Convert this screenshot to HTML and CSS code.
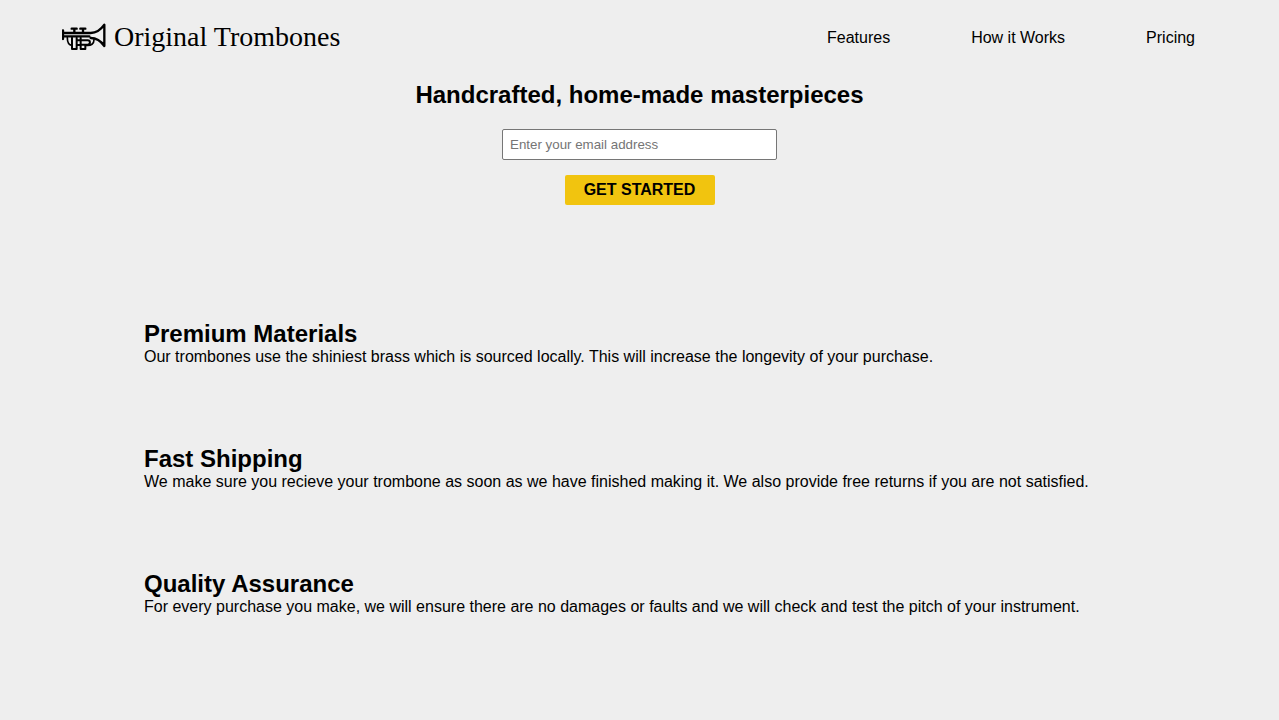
FILE: index.html
```html
<!DOCTYPE html>
<html lang="en">
<head>
  <meta charset="utf-8">
  <meta name="viewport" content="width=device-width, initial-scale=1">
  <title>Original Trombones</title>
  <link rel="stylesheet" href="styles.css">
</head>
<body class="page">
  <header class="header">
    <a class="brand" href="#top">
      <svg class="brand-icon" viewBox="20 22 132 84" fill="none" stroke="#000" stroke-width="7" stroke-linejoin="round" stroke-linecap="round" aria-hidden="true">
        <path d="M23 44v26M24 52h82c18 0 30-9 41-25v64c-11-16-23-24-41-24M24 62h78"/>
        <path d="M49 39h15M75 39h15M57 40v11M83 40v11"/>
        <path d="M36 66c0 14 5 22 14 23M92 89c16 2 24-5 24-17" stroke-width="5"/>
        <path d="M50 66v34h14v-34M76 66v34h14v-10M64 74h12M64 88h12M78 74h19c9 0 9 13 0 13h-19" stroke-width="6"/>
      </svg>
      <span class="brand-name">Original Trombones</span>
    </a>
    <nav class="nav" aria-label="Main">
      <a class="nav-link" href="#features">Features</a>
      <a class="nav-link" href="#how">How it Works</a>
      <a class="nav-link" href="#pricing">Pricing</a>
    </nav>
  </header>
  <main>
    <section class="hero" id="top">
      <h1 class="title">Handcrafted, home-made masterpieces</h1>
      <form class="signup">
        <input class="email" type="email" placeholder="Enter your email address" aria-label="Email address">
        <button class="submit" type="submit">GET STARTED</button>
      </form>
    </section>
    <section class="features" id="features">
      <article>
        <h2 class="title">Premium Materials</h2>
        <p class="text">Our trombones use the shiniest brass which is sourced locally. This will increase the longevity of your purchase.</p>
      </article>
      <article>
        <h2 class="title">Fast Shipping</h2>
        <p class="text">We make sure you recieve your trombone as soon as we have finished making it. We also provide free returns if you are not satisfied.</p>
      </article>
      <article>
        <h2 class="title">Quality Assurance</h2>
        <p class="text">For every purchase you make, we will ensure there are no damages or faults and we will check and test the pitch of your instrument.</p>
      </article>
    </section>
  </main>
</body>
</html>
```
FILE: styles.css
```css
* {
  box-sizing: border-box;
}

.page {
  margin: 0;
  background: #eee;
  color: #000;
  font: 16px/20px "Liberation Sans", Arial, sans-serif;
}

.header {
  display: flex;
  flex-wrap: wrap;
  justify-content: space-between;
  align-items: center;
  padding: 20px 84px 20px 62px;
}

.brand {
  display: flex;
  align-items: center;
  gap: 8px;
  color: inherit;
  text-decoration: none;
}

.brand-icon {
  width: 44px;
  height: 28px;
}

.brand-name {
  font: 28px/34px "Liberation Serif", serif;
}

.nav {
  display: flex;
  flex-wrap: wrap;
  gap: 16px 81px;
  padding-top: 2px;
}

.nav-link {
  color: inherit;
  text-decoration: none;
}

.title {
  margin: 0;
  font-size: 24px;
  line-height: 27px;
}

.hero {
  display: flex;
  flex-direction: column;
  align-items: center;
  gap: 21px;
  padding: 7px 16px 0;
  text-align: center;
}

.signup {
  display: flex;
  flex-direction: column;
  align-items: center;
  gap: 15px;
}

.email {
  width: 275px;
  max-width: 100%;
  height: 31px;
  padding: 0 7px;
  border: 1px solid #767676;
  border-radius: 2px;
  background: #fff;
  font-family: "Liberation Sans", Arial, sans-serif;
}

.submit {
  width: 150px;
  height: 30px;
  padding: 0;
  border: 0;
  border-radius: 2px;
  background: #f1c40f;
  color: #000;
  font: bold 16px/20px "Liberation Sans", Arial, sans-serif;
}

.features {
  display: grid;
  gap: 78px;
  padding: 115px 144px 80px;
}

.text {
  margin: 0;
}
```
